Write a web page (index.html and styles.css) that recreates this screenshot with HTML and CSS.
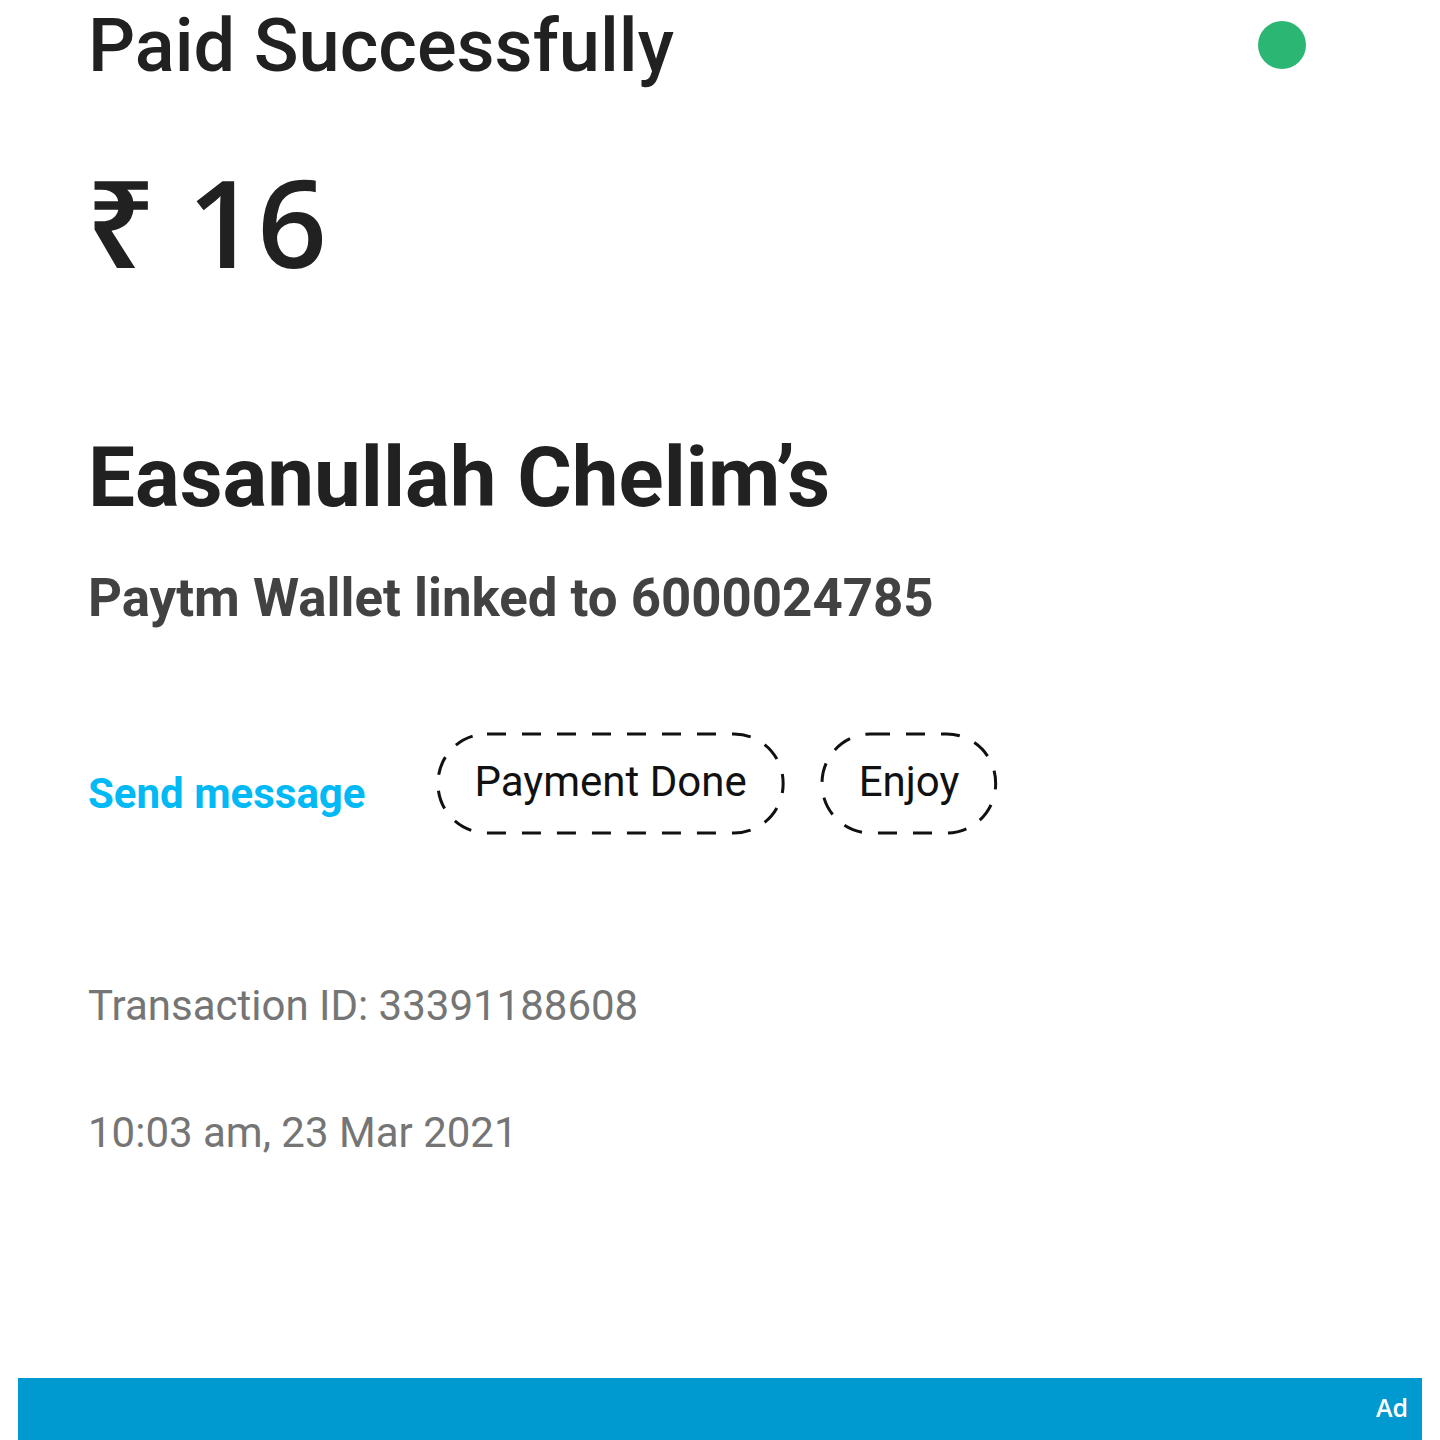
FILE: index.html
```html
<!DOCTYPE html>
<html>
<head>
<meta charset="utf-8">
<link rel="stylesheet" href="styles.css">
</head>
<body>
<div class="page">
  <div class="header">
    <h1 class="title">Paid Successfully</h1>
    <span class="dot"></span>
  </div>
  <div class="amount"><span class="rupee">₹</span> 16</div>
  <div class="name">Easanullah Chelim’s</div>
  <div class="wallet">Paytm Wallet linked to 6000024785</div>
  <div class="actions">
    <span class="send">Send message</span>
    <span class="chips">
      <span class="chip">Payment Done<svg class="chip-border"><rect x="0" y="0" width="100%" height="100%" rx="49" ry="49"/></svg></span>
      <span class="chip">Enjoy<svg class="chip-border"><rect x="0" y="0" width="100%" height="100%" rx="49" ry="49"/></svg></span>
    </span>
  </div>
  <div class="txn">Transaction ID: 33391188608</div>
  <div class="date">10:03 am, 23 Mar 2021</div>
</div>
<div class="adbar"><span class="ad">Ad</span></div>
</body>
</html>
```
FILE: styles.css
```css
html, body {
  margin: 0;
  padding: 0;
  background: #ffffff;
}
body {
  width: 1440px;
  height: 1440px;
  position: relative;
  overflow: hidden;
  font-family: Roboto, "Liberation Sans", sans-serif;
  color: #212121;
}
.page {
  padding: 0 134px 0 88px;
}
.header {
  display: flex;
  justify-content: space-between;
  align-items: flex-start;
  height: 110px;
}
.title {
  margin: 0;
  font-size: 74px;
  font-weight: 500;
  line-height: 92px;
  color: #212121;
}
.dot {
  width: 48px;
  height: 48px;
  border-radius: 50%;
  background: #2bb673;
  margin-top: 21px;
}
.amount {
  font-family: "Open Sans", "Noto Sans", sans-serif;
  font-size: 122px;
  font-weight: 600;
  line-height: 160px;
  margin-top: 31px;
  margin-left: -2px;
  color: #212121;
}
.name {
  margin-top: 127px;
  font-size: 83.5px;
  font-weight: 700;
  line-height: 100px;
  color: #212121;
}
.wallet {
  margin-top: 38px;
  font-size: 52.8px;
  font-weight: 700;
  line-height: 64px;
  color: #424242;
}
.actions {
  display: flex;
  align-items: center;
  margin-top: 102px;
  gap: 71px;
}
.send {
  font-size: 42px;
  font-weight: 700;
  color: #00b9f5;
  padding-top: 20px;
}
.chips {
  display: flex;
  gap: 36px;
}
.chip {
  position: relative;
  display: inline-block;
  padding: 0 38px;
  height: 102px;
  line-height: 100px;
  font-size: 42px;
  color: #111;
}
.chip-border {
  position: absolute;
  left: 1.5px;
  top: 1.5px;
  width: calc(100% - 3px);
  height: calc(100% - 3px);
  overflow: visible;
}
.chip-border rect {
  fill: none;
  stroke: #111;
  stroke-width: 3;
  stroke-dasharray: 19 16;
}
.txn {
  margin-top: 148px;
  font-size: 42px;
  color: #757575;
  line-height: 48px;
}
.date {
  margin-top: 79px;
  font-size: 42px;
  color: #757575;
  line-height: 48px;
}
.adbar {
  position: absolute;
  left: 18px;
  right: 18px;
  top: 1378px;
  height: 62px;
  background: #0099d0;
  display: flex;
  justify-content: flex-end;
  align-items: center;
}
.ad {
  color: #ffffff;
  font-family: "Open Sans", sans-serif;
  font-weight: 600;
  font-size: 25px;
  margin-right: 14px;
  margin-bottom: 4px;
}
```
